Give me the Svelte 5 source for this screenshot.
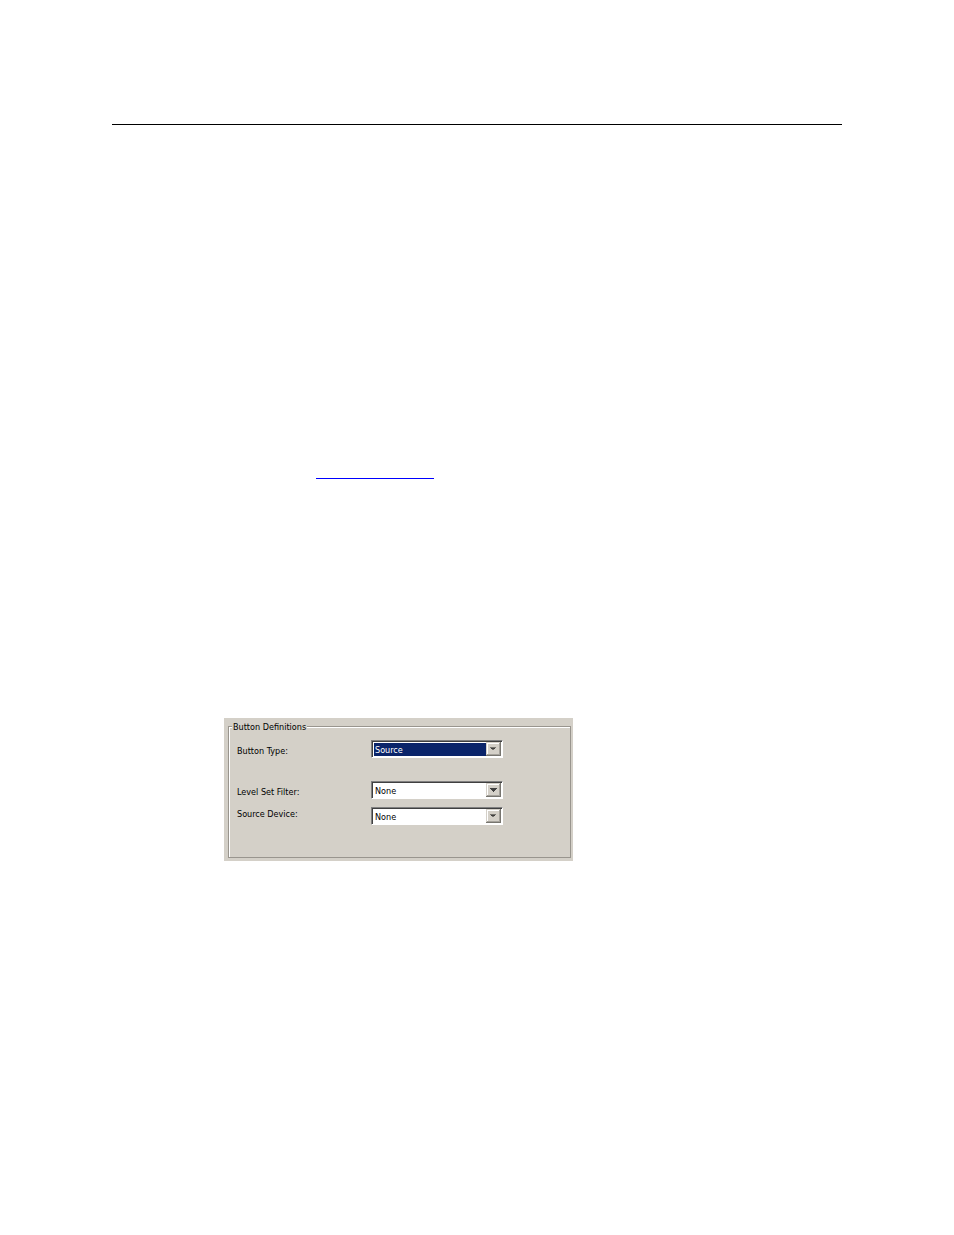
<script lang="ts">
  let buttonType = $state("Source");
  let levelFilter = $state("None");
  let sourceDevice = $state("None");
</script>

{#snippet arrow(dim = false)}
  <svg class="arrow" viewBox="0 0 15 14" aria-hidden="true" shape-rendering="crispEdges">
    <rect width="15" height="14" fill="#d4d0c8" />
    <path d="M1 1H14V2H2V13H1Z" fill="#ffffff" />
    <path d="M14 0H15V14H0V13H14Z" fill="#77756f" />
    <path d="M13 1H14V13H1V12H13Z" fill="#a5a29b" />
    {#if dim}
      <path d="M4 5H10V6H4ZM6 7H8V8H6Z" fill="#77756f" />
      <path d="M5 6H9V7H5Z" fill="#404040" />
    {:else}
      <path d="M4 5H11V6H10V7H9V8H8V9H7V8H6V7H5V6H4Z" fill="#404040" />
    {/if}
  </svg>
{/snippet}

<main>
  <hr />
  <p class="reference"><a href="#definitions" aria-label="Button Definitions"></a></p>

  <form class="panel" id="definitions">
    <fieldset>
      <legend>Button Definitions</legend>
      <div class="row type">
        <label for="button-type">Button Type:</label>
        <div class="combo">
          <select id="button-type" class="selected" bind:value={buttonType}>
            <option>Source</option>
          </select>
          {@render arrow(true)}
        </div>
      </div>
      <div class="row">
        <label for="level-filter">Level Set Filter:</label>
        <div class="combo">
          <select id="level-filter" bind:value={levelFilter}>
            <option>None</option>
          </select>
          {@render arrow()}
        </div>
      </div>
      <div class="row device">
        <label for="source-device">Source Device:</label>
        <div class="combo">
          <select id="source-device" bind:value={sourceDevice}>
            <option>None</option>
          </select>
          {@render arrow(true)}
        </div>
      </div>
    </fieldset>
  </form>
</main>

<style>
  :global(body) {
    margin: 0;
    background: #ffffff;
  }

  main {
    padding: 124px 112px;
    color: #000000;
    font: 9px/12px "DejaVu Sans Condensed", "DejaVu Sans", sans-serif;
  }

  hr {
    height: 1px;
    margin: 0;
    border: 0;
    background: #000000;
  }

  .reference {
    margin: 337px 0 239px 204px;
  }
  .reference a {
    display: block;
    width: 118px;
    height: 16px;
    border-bottom: 1px solid #0000ff;
  }

  .panel {
    box-sizing: border-box;
    max-width: 349px;
    margin-left: 112px;
    padding: 2px 2px 3px 4px;
    background: #d4d0c8;
  }

  fieldset {
    min-width: 0;
    margin: 0;
    padding: 7px 8px 32px;
    border: 1px solid #99958e;
    box-shadow: inset 1px 1px #ffffff;
  }
  legend {
    margin-left: -5px;
    padding: 1px 1px 0;
    background: #d4d0c8;
  }

  .row {
    display: grid;
    grid-template-columns: 134px 132px;
    align-items: end;
    margin-bottom: 8px;
  }
  .row.type {
    margin-bottom: 23px;
  }
  .row.device {
    align-items: start;
    margin-bottom: 0;
  }

  label {
    padding: 1px 0;
  }

  .combo {
    display: flex;
    box-sizing: border-box;
    height: 18px;
    padding: 1px;
    border: 1px solid;
    border-color: #808080 #ffffff #ffffff #808080;
    background: #ffffff;
    box-shadow: inset 1px 1px #404040;
  }
  select {
    flex: 1;
    min-width: 0;
    margin: 1px 0 0 1px;
    padding: 0 1px;
    border: 0;
    border-radius: 0;
    outline: 0;
    appearance: none;
    background: #ffffff;
    color: #000000;
    font: inherit;
  }
  select.selected {
    background: #0a246a;
    color: #ffffff;
  }

  .arrow {
    width: 15px;
    height: 14px;
    pointer-events: none;
  }
</style>
